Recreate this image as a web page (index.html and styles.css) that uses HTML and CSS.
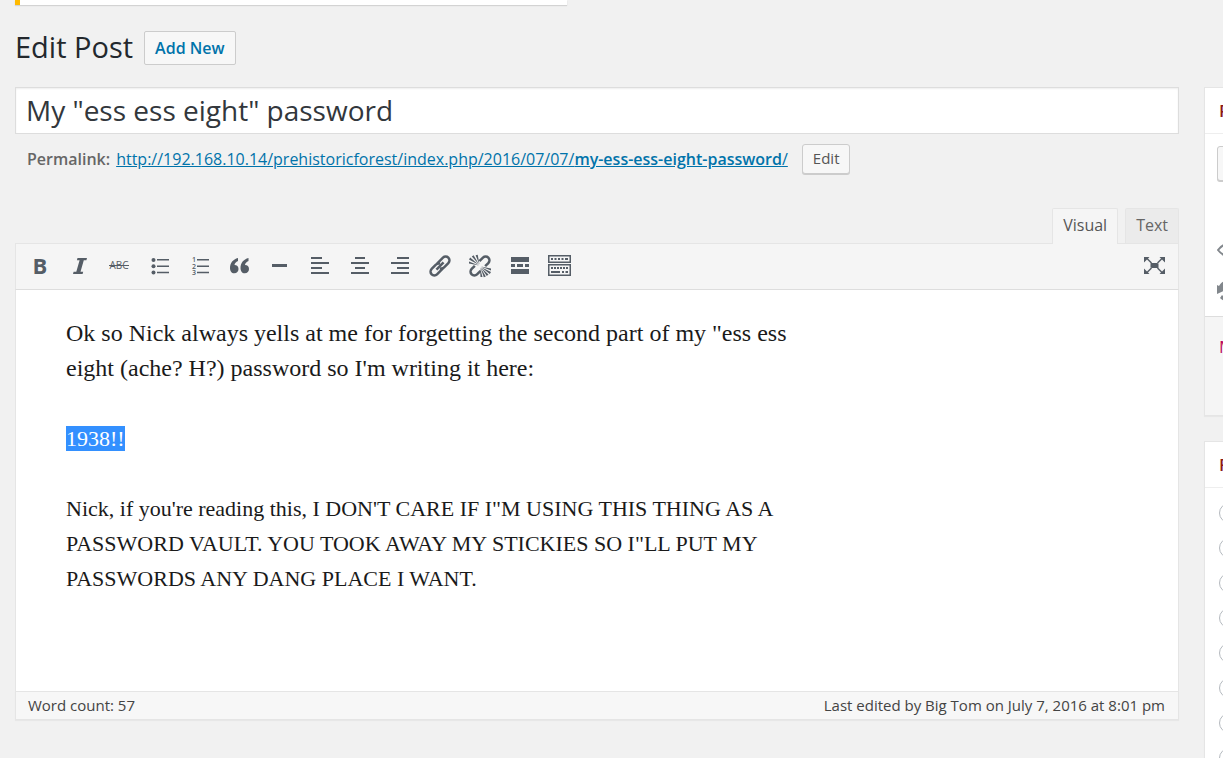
FILE: index.html
```html
<!DOCTYPE html>
<html lang="en">
<head>
<meta charset="utf-8">
<title>Edit Post</title>
<link rel="stylesheet" href="styles.css">
</head>
<body>
<div class="notice"></div>
<header class="page-head">
  <h1 class="page-title">Edit Post</h1>
  <a class="add-new" href="#new">Add New</a>
</header>
<div class="columns">
  <main class="main">
    <input class="title-input" type="text" aria-label="Post title" value='My "ess ess eight" password'>
    <div class="permalink">
      <strong>Permalink:</strong>
      <a class="permalink-url" href="#post">http://192.168.10.14/prehistoricforest/index.php/2016/07/07/<b>my-ess-ess-eight-password</b>/</a>
      <button class="edit-button" type="button">Edit</button>
    </div>
    <section class="editor">
      <div class="tabs">
        <button class="tab tab-active" type="button">Visual</button>
        <button class="tab" type="button">Text</button>
      </div>
      <div class="toolbar">
        <button class="tool" type="button" aria-label="Bold"><svg class="icon" viewBox="0 0 24 24"><text class="glyph-bold" x="12" y="20">B</text></svg></button>
        <button class="tool" type="button" aria-label="Italic"><svg class="icon" viewBox="0 0 24 24"><path d="M9.500 4H19l-.6 2.300h-2.600L12.500 17.700h2.700L14.600 20H5l.6-2.300h2.700L11.600 6.300H8.900z"/></svg></button>
        <button class="tool" type="button" aria-label="Strikethrough"><svg class="icon" viewBox="0 0 24 24"><text class="glyph-strike" x="11" y="15">ABC</text><path d="M1 11h20v1H1z"/></svg></button>
        <button class="tool" type="button" aria-label="Bulleted list"><svg class="icon" viewBox="0 0 24 24"><circle cx="5.5" cy="6" r="2"/><circle cx="5.5" cy="12.3" r="2"/><circle cx="5.5" cy="18.5" r="2"/><path d="M9 5h12v1.6H9zM9 11.4h12V13H9zM9 17.7h12v1.6H9z"/></svg></button>
        <button class="tool" type="button" aria-label="Numbered list"><svg class="icon" viewBox="0 0 24 24"><text class="glyph-number" x="4" y="8">1</text><text class="glyph-number" x="4" y="14.5">2</text><text class="glyph-number" x="4" y="21">3</text><path d="M9 5h12v1.5H9zM9 11.4h12v1.5H9zM9 17.7h12v1.5H9z"/></svg></button>
        <button class="tool" type="button" aria-label="Blockquote"><svg class="icon" viewBox="0 0 24 24"><path d="M10 4v3C8 8 6.700 9.300 6.500 11c2.500 0 4 1.600 4 4s-1.700 4.300-4.200 4.300C3.500 19.300 2 17 2 14 2 9 5 5.300 10 4zM20.500 4v3c-2 1-3.300 2.300-3.500 4 2.500 0 4 1.600 4 4s-1.700 4.300-4.200 4.300c-2.800 0-4.300-2.300-4.300-5.300 0-5 3-8.700 8-10z"/></svg></button>
        <button class="tool" type="button" aria-label="Horizontal line"><svg class="icon" viewBox="0 0 24 24"><path d="M4 10h15v3H4z"/></svg></button>
        <button class="tool" type="button" aria-label="Align left"><svg class="icon" viewBox="0 0 24 24"><path d="M3 3h11v2H3zM3 8h18v2H3zM3 13h11v2H3zM3 18h18v2H3z"/></svg></button>
        <button class="tool" type="button" aria-label="Align center"><svg class="icon" viewBox="0 0 24 24"><path d="M7 3h10v2H7zM3 8h18v2H3zM7 13h10v2H7zM3 18h18v2H3z"/></svg></button>
        <button class="tool" type="button" aria-label="Align right"><svg class="icon" viewBox="0 0 24 24"><path d="M9 3h12v2H9zM3 8h18v2H3zM9 13h12v2H9zM3 18h18v2H3z"/></svg></button>
        <button class="tool" type="button" aria-label="Insert link"><svg class="icon" viewBox="0 0 24 24"><g class="stroke" transform="rotate(-45 12 12)"><path d="M13 15.800H4a3.800 3.800 0 0 1 0-7.600h6a3.800 3.800 0 0 1 3.500 2.300M11 8.200h9a3.800 3.800 0 0 1 0 7.600h-6a3.800 3.800 0 0 1-3.500-2.300"/><path d="M7 12h10"/></g></svg></button>
        <button class="tool" type="button" aria-label="Remove link"><svg class="icon" viewBox="0 0 24 24"><g class="stroke" transform="rotate(-45 12 12)"><path d="M9 15.800H4a3.800 3.800 0 0 1 0-7.600h4.500M15 8.200h5a3.800 3.800 0 0 1 0 7.600h-4.500"/></g><path d="M11 11 1 5.500 2.200 3.600zM11 10.500 3.800 2.400 5.600 1.200zM11.500 10.500 7.600 1.200 9.700.8zM11 11.500 1 9.500V7.500zM13 13l10 5-1.200 2zM13 13.500l7.500 7-1.700 1.600zM12.500 13.500l5.300 9-2 .7zM13 12.500l10 2V16.500zM12 14l2.500 9h-2z"/></svg></button>
        <button class="tool" type="button" aria-label="Read more"><svg class="icon" viewBox="0 0 24 24"><path d="M3 3h18v5H3zM3 10h4v3H3zM9 10h6v3H9zM17 10h4v3h-4zM3 15h18v5H3z"/></svg></button>
        <button class="tool" type="button" aria-label="Toolbar toggle"><svg class="icon" viewBox="0 0 24 24"><path fill-rule="evenodd" d="M0 1h23v8H0zM1.500 2.500v5h20v-5zM0 10h23v12H0zM1.500 11.500v9h20v-9z"/><path d="M3 4h2v2H3zM6.500 4h2v2h-2zM10 4h2v2h-2zM13.500 4h2v2h-2zM17 4h3v2h-3zM3 13h2v2H3zM6 13h2v2H6zM9 13h2v2H9zM12 13h2v2h-2zM15 13h2v2h-2zM18 13h2v2h-2zM3 17h9v2H3zM14 17h2v2h-2zM17.500 17H20v2h-2.500z"/></svg></button>
        <button class="tool tool-end" type="button" aria-label="Distraction-free writing"><svg class="icon" viewBox="0 0 24 24"><path d="M8.500 9h8v5h-8zM2 3h5.500L6 4.500 10 8.500 9 9.500 5 5.500 2 8.500zM23 3h-5.500L19 4.500l-4 4 1 1 4-4 3 3zM2 20h5.500L6 18.500l4-4-1-1-4 4-3-3zM23 20h-5.500l1.500-1.500-4-4 1-1 4 4 3-3z"/></svg></button>
      </div>
      <div class="content" role="textbox" aria-multiline="true" aria-label="Post content" contenteditable="true" spellcheck="false">
        <p>Ok so Nick always yells at me for forgetting the second part of my "ess ess<br>eight (ache? H?) password so I'm writing it here:</p>
        <p class="tight"><mark>1938!!</mark></p>
        <p class="tight">Nick, if you're reading this, I DON'T CARE IF I"M USING THIS THING AS A<br>PASSWORD VAULT. YOU TOOK AWAY MY STICKIES SO I"LL PUT MY<br>PASSWORDS ANY DANG PLACE I WANT.</p>
      </div>
      <footer class="status">
        <span>Word count: 57</span>
        <span>Last edited by Big Tom on July 7, 2016 at 8:01 pm</span>
      </footer>
    </section>
  </main>
  <aside class="side">
    <section class="box">
      <h2 class="box-title">Publish</h2>
      <div class="publish-body">
        <button class="side-button" type="button">Preview</button>
        <svg class="side-icon" viewBox="0 0 24 24"><path class="eye" d="M1 12C7 4 17 4 23 12 17 20 7 20 1 12z"/></svg>
        <svg class="side-icon" viewBox="0 0 24 24"><path d="M0 6l2 1c5-9 18-7 19 4s-11 15-18 8l2-3c5 5 12 2 12-5S10 3 7 9l2 2-9 4z"/></svg>
      </div>
      <div class="publish-foot"><a class="trash" href="#trash">Move to Trash</a></div>
    </section>
    <section class="box">
      <h2 class="box-title">Format</h2>
      <div class="formats">
        <input type="radio" name="format" aria-label="Standard">
        <input type="radio" name="format" aria-label="Aside">
        <input type="radio" name="format" aria-label="Image">
        <input type="radio" name="format" aria-label="Video">
        <input type="radio" name="format" aria-label="Quote">
        <input type="radio" name="format" aria-label="Link">
        <input type="radio" name="format" aria-label="Gallery">
        <input type="radio" name="format" aria-label="Status">
      </div>
    </section>
  </aside>
</div>
</body>
</html>
```
FILE: styles.css
```css
* { box-sizing: border-box; }
html { overflow: hidden; }
body {
  margin: 0;
  padding-left: 15px;
  overflow: hidden;
  background: #f1f1f1;
  color: #444;
  font: 16px/24px "Open Sans", sans-serif;
}
button, input { font: inherit; color: inherit; margin: 0; }
.notice {
  width: 552px;
  height: 5px;
  background: #fff;
  border-left: 5px solid #ffba00;
  box-shadow: 0 1px 1px rgba(0, 0, 0, .12);
}
.page-head {
  display: flex;
  align-items: center;
  gap: 11px;
  padding: 26px 0 22px;
}
.page-title {
  margin: 0;
  padding-bottom: 2px;
  color: #23282d;
  font-size: 29px;
  font-weight: 400;
  line-height: 32px;
}
.add-new {
  padding: 4px 10px;
  border: 1px solid #ccc;
  border-radius: 2px;
  background: #f7f7f7;
  color: #0073aa;
  font-weight: 600;
  text-decoration: none;
}
.columns {
  display: grid;
  grid-template-columns: minmax(0, 1fr) 350px;
  gap: 25px;
  margin-right: -331px;
}
.title-input {
  display: block;
  width: 100%;
  height: 47px;
  padding: 0 10px 2px;
  border: 1px solid #ddd;
  background: #fff;
  box-shadow: inset 0 1px 2px rgba(0, 0, 0, .07);
  color: #32373c;
  font-size: 28px;
}
.permalink {
  display: flex;
  align-items: center;
  gap: 6px;
  padding: 10px 12px 0;
  color: #666;
}
.permalink strong, .permalink b { font-weight: 600; }
.permalink-url { color: #0073aa; }
.edit-button {
  height: 30px;
  margin-left: 8px;
  padding: 0 10px 2px;
  border: 1px solid #ccc;
  border-radius: 3px;
  background: #f7f7f7;
  box-shadow: 0 1px 0 #ccc;
  color: #555;
  font-size: 15px;
}
.editor { padding-top: 34px; }
.tabs {
  display: flex;
  justify-content: flex-end;
  gap: 7px;
}
.tab {
  height: 35px;
  padding: 0 10px 2px;
  border: 1px solid #e5e5e5;
  border-bottom: 0;
  border-radius: 2px 2px 0 0;
  background: #ebebeb;
  color: #666;
}
.tab-active {
  height: 36px;
  margin-bottom: -1px;
  padding-bottom: 3px;
  position: relative;
  background: #f5f5f5;
  color: #555;
}
.toolbar {
  display: flex;
  padding: 10px 4px 11px;
  border: 1px solid #e5e5e5;
  border-bottom-color: #ddd;
  background: #f5f5f5;
}
.tool {
  width: 40px;
  height: 24px;
  padding: 0 8px;
  border: 0;
  background: none;
}
.tool-end { margin-left: auto; }
.icon {
  display: block;
  width: 24px;
  height: 24px;
  fill: #555d66;
  overflow: visible;
}
.stroke { fill: none; stroke: #555d66; stroke-width: 2.5; }
.glyph-bold, .glyph-strike { text-anchor: middle; }
.glyph-bold { font: 700 22px "Open Sans", sans-serif; }
.glyph-strike { font: 400 10px "Open Sans", sans-serif; }
.glyph-number { font: 600 7px "Open Sans", sans-serif; }
.content {
  min-height: 401px;
  padding: 26px 50px 24px;
  border: solid #e5e5e5;
  border-width: 0 1px;
  background: #fff;
  color: #1a1a1a;
  font: 24px/35px "Liberation Serif", serif;
}
.content p { margin: 0 0 35px; }
.content .tight { font-size: 22px; }
.content mark { background: #3390ff; color: #fff; }
.status {
  display: flex;
  justify-content: space-between;
  padding: 2px 13px 2px 12px;
  border: 1px solid #e5e5e5;
  background: #f7f7f7;
  box-shadow: 0 1px 1px rgba(0, 0, 0, .04);
  font-size: 15px;
  line-height: 23px;
}
.side { display: grid; align-content: start; gap: 25px; }
.box {
  border: 1px solid #e5e5e5;
  background: #fff;
  box-shadow: 0 1px 1px rgba(0, 0, 0, .04);
}
.box-title {
  margin: 0;
  padding: 11px 14px 10px;
  border-bottom: 1px solid #eee;
  color: #8b1a1a;
  font-size: 17px;
  font-weight: 600;
}
.publish-body {
  display: flex;
  flex-direction: column;
  align-items: flex-start;
  gap: 17px;
  height: 182px;
  padding: 12px;
}
.side-button {
  height: 35px;
  margin-bottom: 40px;
  padding: 0 12px;
  border: 1px solid #ccc;
  border-radius: 3px;
  background: #f7f7f7;
  box-shadow: 0 1px 0 #ccc;
}
.side-icon { width: 24px; height: 24px; flex: none; fill: #82878c; }
.eye { fill: none; stroke: #82878c; stroke-width: 2; }
.publish-foot {
  height: 99px;
  padding: 18px 14px;
  border-top: 1px solid #ddd;
  background: #f5f5f5;
}
.trash { color: #bc0b5b; font-size: 17px; text-decoration: none; }
.formats { display: grid; gap: 15px; padding: 15px 14px; }
.formats input {
  appearance: none;
  width: 20px;
  height: 20px;
  border: 1px solid #b4b9be;
  border-radius: 50%;
  background: #fff;
}
```
